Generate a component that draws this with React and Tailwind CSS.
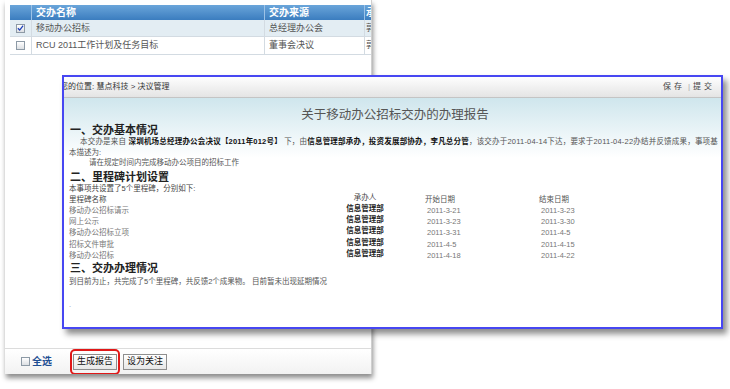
import React from "react";

const FONT = "font-['Liberation_Sans','Noto_Sans_CJK_SC',sans-serif]";

function Box({ checked }) {
  return (
    <span className="inline-flex h-[9px] w-[9px] shrink-0 items-center justify-center border border-[#8d9aa6] bg-[linear-gradient(#ffffff,#dcdfe3)]">
      {checked && (
        <svg width="8" height="8" viewBox="0 0 8 8">
          <path d="M1 4.2 L3.1 6.4 L7 1.2" fill="none" stroke="#1d3fb8" strokeWidth="1.5" />
        </svg>
      )}
    </span>
  );
}

function Btn({ children }) {
  return (
    <div className="flex h-[16px] w-[44px] items-center justify-center border border-[#8e8e8e] bg-[linear-gradient(#ffffff,#e7e7e7)] text-[9px] text-[#111]">
      {children}
    </div>
  );
}

const rows = [
  ["移动办公招标请示", "2011-3-21", "2011-3-23"],
  ["网上公示", "2011-3-23", "2011-3-30"],
  ["移动办公招标立项", "2011-3-31", "2011-4-5"],
  ["招标文件审批", "2011-4-5", "2011-4-15"],
  ["移动办公招标", "2011-4-18", "2011-4-22"],
];

export default function App() {
  return (
    <div className={`${FONT} relative h-[389px] w-[730px] overflow-hidden bg-white`}>
      {/* back panel */}
      <div className="ml-[5px] flex h-[374px] w-[367px] flex-col overflow-hidden border-r border-[#cfcfcf] bg-white shadow-[1px_4px_5px_rgba(0,0,0,0.45)]">
        <div className="pl-[5px] pt-[5px]">
          <div className="flex h-[15px] w-[420px] items-center bg-[linear-gradient(#6aa5da,#3b7dbf)] text-[10px] font-bold leading-[15px] text-white">
            <div className="h-full w-[22px] border-r border-[#9cc2e6]" />
            <div className="h-full w-[233px] border-r border-[#9cc2e6] pl-[4px]">交办名称</div>
            <div className="h-full w-[100px] border-r border-[#9cc2e6] pl-[4px]">交办来源</div>
            <div className="h-full w-[60px] pl-[1px]">承办人</div>
          </div>
          <div className="flex h-[17px] w-[420px] items-center border-b border-[#d3dbe2] bg-[#e3edf3] text-[9px] leading-[16px] text-[#555]">
            <div className="flex h-full w-[22px] items-center justify-center border-r border-[#d3dbe2]">
              <Box checked />
            </div>
            <div className="h-full w-[233px] border-r border-[#d3dbe2] pl-[4px]">移动办公招标</div>
            <div className="h-full w-[100px] border-r border-[#d3dbe2] pl-[4px]">总经理办公会</div>
            <div className="h-full w-[60px] pl-[1px]">郭某</div>
          </div>
          <div className="flex h-[18px] w-[420px] items-center border-b border-[#d3dbe2] bg-white text-[9px] leading-[17px] text-[#555]">
            <div className="flex h-full w-[22px] items-center justify-center border-r border-[#d3dbe2]">
              <Box />
            </div>
            <div className="h-full w-[233px] border-r border-[#d3dbe2] pl-[4px]">RCU 2011工作计划及任务目标</div>
            <div className="h-full w-[100px] border-r border-[#d3dbe2] pl-[4px]">董事会决议</div>
            <div className="h-full w-[60px] pl-[1px]">郭某</div>
          </div>
        </div>
        <div className="flex-1" />
        <div className="flex h-[26px] items-center border-t border-[#dcdcdc] bg-[linear-gradient(#ffffff,#f2f2f2)] pl-[16px]">
          <Box />
          <span className="ml-[2px] text-[10px] font-bold text-[#1f4f93]">全选</span>
          <div className="ml-[18px] flex h-[26px] items-center rounded-[5px] border-2 border-[#e01818] px-[1px]">
            <Btn>生成报告</Btn>
          </div>
          <div className="ml-[3px]">
            <Btn>设为关注</Btn>
          </div>
        </div>
      </div>

      {/* front panel */}
      <div className="absolute left-[62px] top-[75px] flex h-[254px] w-[661px] flex-col overflow-hidden border-2 border-[#4747f2] bg-white shadow-[4px_5px_6px_rgba(0,0,0,0.45)]">
        <div className="flex h-[21px] shrink-0 items-center justify-between border-b border-[#c4c4c4] bg-[linear-gradient(#fefefe,#e4e4e4)] pr-[6px] text-[8px] text-[#333]">
          <span className="-ml-[4px] whitespace-nowrap">您的位置: 慧点科技 &gt; 决议管理</span>
          <span className="flex items-center tracking-[3px] text-[#444]">
            保存<span className="mx-[3px] tracking-normal text-[#aaa]">|</span>提交
          </span>
        </div>
        <div className="flex-1 bg-[linear-gradient(to_bottom,#cfe6ed,#ffffff_60px)] pl-[5px]">
          <div className="mt-[9px] text-center text-[12.5px] leading-[16px] text-[#555]">关于移动办公招标交办的办理报告</div>
          <div className="pl-[1px] text-[11px] font-bold leading-[14px] text-[#222]">一、交办基本情况</div>
          <div className="whitespace-nowrap pl-[11px] text-[7.5px] leading-[10.5px] tracking-[0.2px] text-[#555]">
            本交办是来自 <b className="text-[#111]">深圳机场总经理办公会决议【2011年012号】</b> 下，由<b className="text-[#111]">信息管理部承办，投资发展部协办，李凡总分管</b>，该交办于2011-04-14下达，要求于2011-04-22办结并反馈成果，事项基
          </div>
          <div className="text-[7.5px] leading-[10.5px] text-[#555]">本描述为:</div>
          <div className="pl-[20px] text-[7.5px] leading-[10.5px] text-[#555]">请在规定时间内完成移动办公项目的招标工作</div>
          <div className="mt-[1px] pl-[1px] text-[11px] font-bold leading-[14px] text-[#222]">二、里程碑计划设置</div>
          <div className="text-[7.5px] leading-[10px] text-[#444]">本事项共设置了5个里程碑，分别如下:</div>
          <div className="flex h-[11.3px] text-[7.5px]">
            <div className="w-[258px] leading-[11.3px] text-[#444]">里程碑名称</div>
            <div className="w-[76px] text-center leading-[7px] text-[#444]">承办人</div>
            <div className="ml-[22px] w-[114px] leading-[11.3px] text-[#555]">开始日期</div>
            <div className="leading-[11.3px] text-[#555]">结束日期</div>
          </div>
          {rows.map(([n, s, e]) => (
            <div key={n} className="flex h-[11.3px] text-[7.5px]">
              <div className="w-[258px] leading-[11.3px] text-[#777]">{n}</div>
              <div className="w-[76px] text-center font-bold leading-[7px] text-[#222]">信息管理部</div>
              <div className="ml-[24px] w-[114px] leading-[11.3px] text-[#777]">{s}</div>
              <div className="leading-[11.3px] text-[#777]">{e}</div>
            </div>
          ))}
          <div className="pl-[1px] text-[11px] font-bold leading-[14px] text-[#222]">三、交办办理情况</div>
          <div className="mt-[2px] text-[7.5px] leading-[10.5px] text-[#555]">到目前为止，共完成了5个里程碑，共反馈2个成果物。 目前暂未出现延期情况</div>
          <div className="mt-[12px] text-[7.5px] leading-[10.5px] text-[#999]">.</div>
        </div>
      </div>
    </div>
  );
}
